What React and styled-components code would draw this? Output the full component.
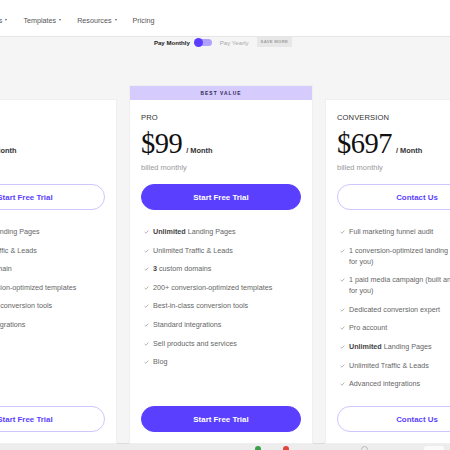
import React from "react";
import styled, { createGlobalStyle } from "styled-components";

const GlobalStyle = createGlobalStyle`
  html, body {
    margin: 0;
    padding: 0;
    background: #f5f5f5;
    overflow: hidden;
  }
  body {
    font-family: "Liberation Sans", Arial, sans-serif;
    -webkit-font-smoothing: antialiased;
  }
`;

const plans = [
  {
    name: "STANDARD",
    price: "$49",
    button: "Start Free Trial",
    features: [
      [<b key="b">Unlimited</b>, " Landing Pages"],
      ["Unlimited Traffic & Leads"],
      ["1 custom domain"],
      ["200+ conversion-optimized templates"],
      ["Best-in-class conversion tools"],
      ["Standard integrations"],
    ],
  },
  {
    name: "PRO",
    price: "$99",
    button: "Start Free Trial",
    featured: true,
    features: [
      [<b key="b">Unlimited</b>, " Landing Pages"],
      ["Unlimited Traffic & Leads"],
      [<b key="b">3</b>, " custom domains"],
      ["200+ conversion-optimized templates"],
      ["Best-in-class conversion tools"],
      ["Standard integrations"],
      ["Sell products and services"],
      ["Blog"],
    ],
  },
  {
    name: "CONVERSION",
    price: "$697",
    button: "Contact Us",
    features: [
      ["Full marketing funnel audit"],
      ["1 conversion-optimized landing page (built for you)"],
      ["1 paid media campaign (built and managed for you)"],
      ["Dedicated conversion expert"],
      ["Pro account"],
      [<b key="b">Unlimited</b>, " Landing Pages"],
      ["Unlimited Traffic & Leads"],
      ["Advanced integrations"],
    ],
  },
];

export default function App() {
  return (
    <>
      <GlobalStyle />
      <Nav>
        <NavItems>
          {["Products", "Templates", "Resources"].map((label) => (
            <NavItem key={label}>
              {label}
              <Caret />
            </NavItem>
          ))}
          <NavItem>Pricing</NavItem>
        </NavItems>
      </Nav>

      <BillingToggle>
        <ToggleLabel active>Pay Monthly</ToggleLabel>
        <Switch>
          <Knob />
        </Switch>
        <ToggleLabel>Pay Yearly</ToggleLabel>
        <SaveBadge>SAVE MORE</SaveBadge>
      </BillingToggle>

      <CardsRow>
        {plans.map((plan) => (
          <PlanCard key={plan.name} plan={plan} />
        ))}
      </CardsRow>

      <StatusBar>
        <Dot color="#3aa14a" style={{ marginLeft: 255 }} />
        <Dot color="#e0443a" style={{ marginLeft: 22 }} />
        <Ring style={{ marginLeft: 72 }} />
        <Pill style={{ marginLeft: 56 }} />
      </StatusBar>
    </>
  );
}

// one pricing column
function PlanCard({ plan }) {
  return (
    <Card featured={plan.featured}>
      {plan.featured && <Banner>BEST VALUE</Banner>}
      <CardBody>
        <PlanName>{plan.name}</PlanName>
        <PriceRow>
          <Price>{plan.price}</Price>
          <Per>/ Month</Per>
        </PriceRow>
        <Billed>billed monthly</Billed>
        <CTA primary={plan.featured}>{plan.button}</CTA>

        <Features>
          {plan.features.map((parts, i) => (
            <Feature key={i}>
              <Check viewBox="0 0 6 5">
                <path d="M0.6 2.6 L2.2 4 L5.4 0.8" />
              </Check>
              <span>{parts}</span>
            </Feature>
          ))}
        </Features>

        <CTA primary={plan.featured} bottom>
          {plan.button}
        </CTA>
      </CardBody>
    </Card>
  );
}

// STYLES - nav
const Nav = styled.header`
  height: 37px;
  background: #fff;
  border-bottom: 1px solid #e6e6e6;
  display: flex;
  align-items: center;
  padding-top: 4px;
  box-sizing: border-box;
`;

const NavItems = styled.nav`
  display: flex;
  align-items: center;
  gap: 16px;
  margin-left: -26px;
`;

const NavItem = styled.span`
  display: flex;
  align-items: center;
  gap: 3px;
  font-size: 7.2px;
  color: #555;
`;

const Caret = styled.i`
  width: 0;
  height: 0;
  border-left: 1.6px solid transparent;
  border-right: 1.6px solid transparent;
  border-top: 2px solid #666;
`;

// STYLES - toggle
const BillingToggle = styled.div`
  height: 10px;
  display: flex;
  align-items: center;
  justify-content: center;
  padding-right: 4px;
`;

const ToggleLabel = styled.span`
  font-size: 6.1px;
  font-weight: ${(p) => (p.active ? 700 : 400)};
  color: ${(p) => (p.active ? "#222" : "#aaa")};
  margin-right: ${(p) => (p.active ? "5px" : "8px")};
`;

const Switch = styled.div`
  width: 17px;
  height: 7px;
  border-radius: 4px;
  background: #b2a2ff;
  display: flex;
  align-items: center;
  margin-right: 8px;
`;

const Knob = styled.div`
  width: 9px;
  height: 9px;
  border-radius: 50%;
  background: #5a3dff;
  margin-left: -1px;
`;

const SaveBadge = styled.span`
  background: #e7e7e7;
  color: #a0a0a0;
  font-size: 4.2px;
  letter-spacing: 0.3px;
  font-weight: 700;
  padding: 3px 4px;
  line-height: 4px;
`;

// STYLES - cards
const CardsRow = styled.section`
  display: flex;
  align-items: stretch;
  gap: 14px;
  margin-top: 39px;
  margin-left: -66px;
`;

const Card = styled.article`
  width: 182px;
  flex-shrink: 0;
  background: #fff;
  display: flex;
  flex-direction: column;
  margin-top: ${(p) => (p.featured ? "0" : "14px")};
  box-shadow: 0 0 0 1px #efefef;
`;

const Banner = styled.div`
  height: 14px;
  background: #d5cbfc;
  color: #2a2550;
  font-size: 4.8px;
  font-weight: 700;
  letter-spacing: 1.1px;
  display: flex;
  align-items: center;
  justify-content: center;
`;

const CardBody = styled.div`
  flex: 1;
  min-height: 343px;
  box-sizing: border-box;
  padding: 12px 11px 11px;
  display: flex;
  flex-direction: column;
`;

const PlanName = styled.div`
  font-size: 7.6px;
  line-height: 11px;
  color: #333;
  letter-spacing: 0.1px;
`;

const PriceRow = styled.div`
  display: flex;
  align-items: baseline;
  gap: 4px;
  margin-top: 7px;
  height: 28px;
`;

const Price = styled.span`
  font-family: "Liberation Serif", "Times New Roman", serif;
  font-size: 28.5px;
  line-height: 28px;
  color: #111;
  letter-spacing: -0.5px;
`;

const Per = styled.span`
  font-size: 7.4px;
  font-weight: 700;
  color: #333;
`;

const Billed = styled.div`
  margin-top: 5px;
  font-size: 7.5px;
  line-height: 10px;
  color: #9a9a9a;
`;

const CTA = styled.button`
  margin-top: ${(p) => (p.bottom ? "auto" : "11px")};
  height: 26px;
  width: 100%;
  border-radius: 13px;
  border: 1px solid ${(p) => (p.primary ? "#5b3ffe" : "#cfc5ff")};
  background: ${(p) => (p.primary ? "#5b3ffe" : "#fff")};
  color: ${(p) => (p.primary ? "#fff" : "#5b3ffe")};
  font-family: "Liberation Sans", Arial, sans-serif;
  font-size: 7.9px;
  font-weight: 700;
  padding: 0;
  flex-shrink: 0;
`;

const Features = styled.ul`
  list-style: none;
  margin: 16px 0 12px;
  padding: 0;
  display: flex;
  flex-direction: column;
  gap: 7.6px;
`;

const Feature = styled.li`
  display: flex;
  align-items: flex-start;
  font-size: 7.2px;
  line-height: 11px;
  color: #666;
  padding-right: 8px;

  b {
    color: #444;
  }
`;

const Check = styled.svg`
  width: 5px;
  height: 4px;
  flex-shrink: 0;
  margin: 4px 4px 0 3px;
  fill: none;
  stroke: #888;
  stroke-width: 0.8;
`;

// STYLES - status strip at the bottom
const StatusBar = styled.footer`
  height: 12px;
  background: #ededed;
  border-top: 1px solid #dcdcdc;
  display: flex;
  align-items: flex-start;
  padding-top: 2px;
  box-sizing: border-box;
`;

const Dot = styled.span`
  width: 6px;
  height: 6px;
  border-radius: 50%;
  background: ${(p) => p.color};
`;

const Ring = styled.span`
  width: 7px;
  height: 7px;
  border-radius: 50%;
  border: 1px solid #b9b9b9;
  box-sizing: border-box;
`;

const Pill = styled.span`
  width: 20px;
  height: 6px;
  border-radius: 2px;
  background: #fafafa;
`;
